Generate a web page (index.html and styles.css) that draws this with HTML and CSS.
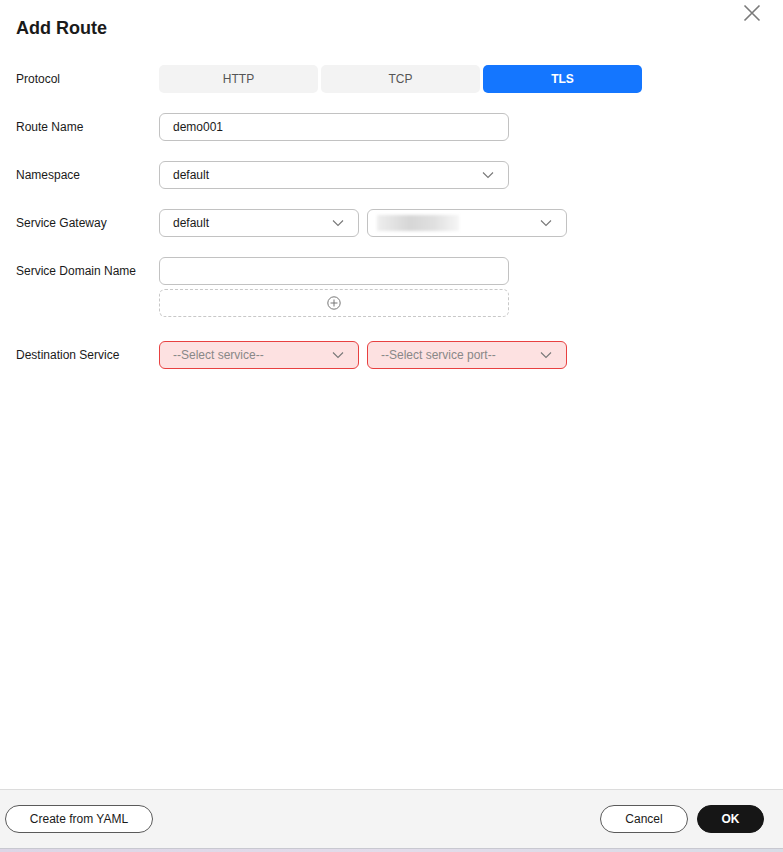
FILE: index.html
```html
<!DOCTYPE html>
<html>
<head>
<meta charset="utf-8">
<link rel="stylesheet" href="styles.css">
</head>
<body>
<div class="dialog">
  <div class="header">
    <h1 class="title">Add Route</h1>
    <button class="close" aria-label="Close">
      <svg width="18" height="18" viewBox="0 0 18 18"><path d="M1.5 1.5 L16.5 16.5 M16.5 1.5 L1.5 16.5" stroke="#7a7a7a" stroke-width="1.6" fill="none"/></svg>
    </button>
  </div>
  <div class="form">
    <div class="row">
      <div class="label">Protocol</div>
      <div class="segments">
        <div class="seg">HTTP</div>
        <div class="seg">TCP</div>
        <div class="seg active">TLS</div>
      </div>
    </div>
    <div class="row">
      <div class="label">Route Name</div>
      <div class="input wide">demo001</div>
    </div>
    <div class="row">
      <div class="label">Namespace</div>
      <div class="input wide select">default<svg class="chev" width="12" height="8" viewBox="0 0 12 8"><path d="M1 1.5 L6 6.5 L11 1.5" stroke="#777" stroke-width="1.1" fill="none"/></svg></div>
    </div>
    <div class="row">
      <div class="label">Service Gateway</div>
      <div class="pair">
        <div class="input half select">default<svg class="chev" width="12" height="8" viewBox="0 0 12 8"><path d="M1 1.5 L6 6.5 L11 1.5" stroke="#777" stroke-width="1.1" fill="none"/></svg></div>
        <div class="input half select"><span class="blur"></span><svg class="chev" width="12" height="8" viewBox="0 0 12 8"><path d="M1 1.5 L6 6.5 L11 1.5" stroke="#777" stroke-width="1.1" fill="none"/></svg></div>
      </div>
    </div>
    <div class="row domain">
      <div class="label">Service Domain Name</div>
      <div class="stack">
        <div class="input wide"></div>
        <div class="addbox">
          <svg width="14" height="14" viewBox="0 0 14 14"><circle cx="7" cy="7" r="6.2" stroke="#777" stroke-width="1" fill="none"/><path d="M7 3.5 V10.5 M3.5 7 H10.5" stroke="#777" stroke-width="1" fill="none"/></svg>
        </div>
      </div>
    </div>
    <div class="row">
      <div class="label">Destination Service</div>
      <div class="pair">
        <div class="input half select error">--Select service--<svg class="chev" width="12" height="8" viewBox="0 0 12 8"><path d="M1 1.5 L6 6.5 L11 1.5" stroke="#777" stroke-width="1.1" fill="none"/></svg></div>
        <div class="input half select error">--Select service port--<svg class="chev" width="12" height="8" viewBox="0 0 12 8"><path d="M1 1.5 L6 6.5 L11 1.5" stroke="#777" stroke-width="1.1" fill="none"/></svg></div>
      </div>
    </div>
  </div>
  <div class="footer">
    <button class="btn">Create from YAML</button>
    <div class="right">
      <button class="btn cancel">Cancel</button>
      <button class="btn ok">OK</button>
    </div>
  </div>
  <div class="strip"></div>
</div>
</body>
</html>
```

FILE: styles.css
```css
html, body {
  margin: 0;
  padding: 0;
  background: #fff;
  font-family: "Liberation Sans", Arial, sans-serif;
  font-size: 12px;
  color: #1a1a1a;
}
.dialog {
  width: 783px;
  height: 852px;
  display: flex;
  flex-direction: column;
  overflow: hidden;
}
.header {
  display: flex;
  justify-content: space-between;
  align-items: flex-start;
  height: 65px;
}
.title {
  margin: 17px 0 0 16px;
  font-size: 18px;
  font-weight: bold;
  line-height: 22px;
  color: #1a1a1a;
}
.close {
  border: none;
  background: none;
  padding: 0;
  margin: 4px 22px 0 0;
  width: 18px;
  height: 18px;
  display: flex;
}
.form {
  flex: 1;
  display: flex;
  flex-direction: column;
  gap: 20px;
  padding-left: 16px;
}
.row {
  display: flex;
  align-items: flex-start;
}
.row.domain {
  margin-bottom: 4px;
}
.label {
  width: 143px;
  flex: none;
  line-height: 28px;
  color: #1a1a1a;
}
.segments {
  display: flex;
  gap: 3px;
}
.seg {
  width: 159px;
  height: 28px;
  line-height: 28px;
  text-align: center;
  background: #f3f3f3;
  border-radius: 5px;
  color: #555;
}
.seg.active {
  background: #1476ff;
  color: #fff;
  font-weight: bold;
}
.input {
  box-sizing: border-box;
  height: 28px;
  border: 1px solid #c2c2c2;
  border-radius: 6px;
  padding: 0 13px;
  line-height: 26px;
  color: #1a1a1a;
  display: flex;
  align-items: center;
}
.wide { width: 350px; }
.half { width: 200px; }
.select { justify-content: space-between; }
.chev { flex: none; margin-right: 1px; }
.pair {
  display: flex;
  gap: 8px;
}
.blur {
  width: 82px;
  height: 16px;
  margin-left: -4px;
  background: linear-gradient(90deg, #eee, #d6d6d6 40%, #e0e0e0 70%, #f6f6f6);
  filter: blur(1.5px);
}
.stack {
  display: flex;
  flex-direction: column;
  gap: 4px;
}
.addbox {
  box-sizing: border-box;
  width: 350px;
  height: 28px;
  border: 1px dashed #c8c8c8;
  border-radius: 6px;
  display: flex;
  align-items: center;
  justify-content: center;
}
.error {
  background: #fde1e1;
  border-color: #e84040;
  color: #888;
}
.footer {
  height: 59px;
  box-sizing: border-box;
  border-top: 1px solid #dcdcdc;
  background: #f4f4f4;
  display: flex;
  align-items: center;
  justify-content: space-between;
  padding: 0 19px 0 5px;
}
.right {
  display: flex;
  gap: 9px;
}
.btn {
  height: 28px;
  border-radius: 14px;
  border: 1px solid #5a5a5a;
  background: #fff;
  font-family: "Liberation Sans", Arial, sans-serif;
  font-size: 12px;
  color: #1a1a1a;
  padding: 0 23px;
  box-sizing: border-box;
}
.footer > .btn { width: 148px; }
.cancel { width: 88px; }
.ok {
  width: 67px;
  background: #161616;
  border-color: #161616;
  color: #fff;
  font-weight: bold;
}
.strip {
  height: 3px;
  background: linear-gradient(90deg, #dcd6e6, #e2dcea 50%, #d8dce6);
  border-top: 1px solid #c8c8d0;
}
```
